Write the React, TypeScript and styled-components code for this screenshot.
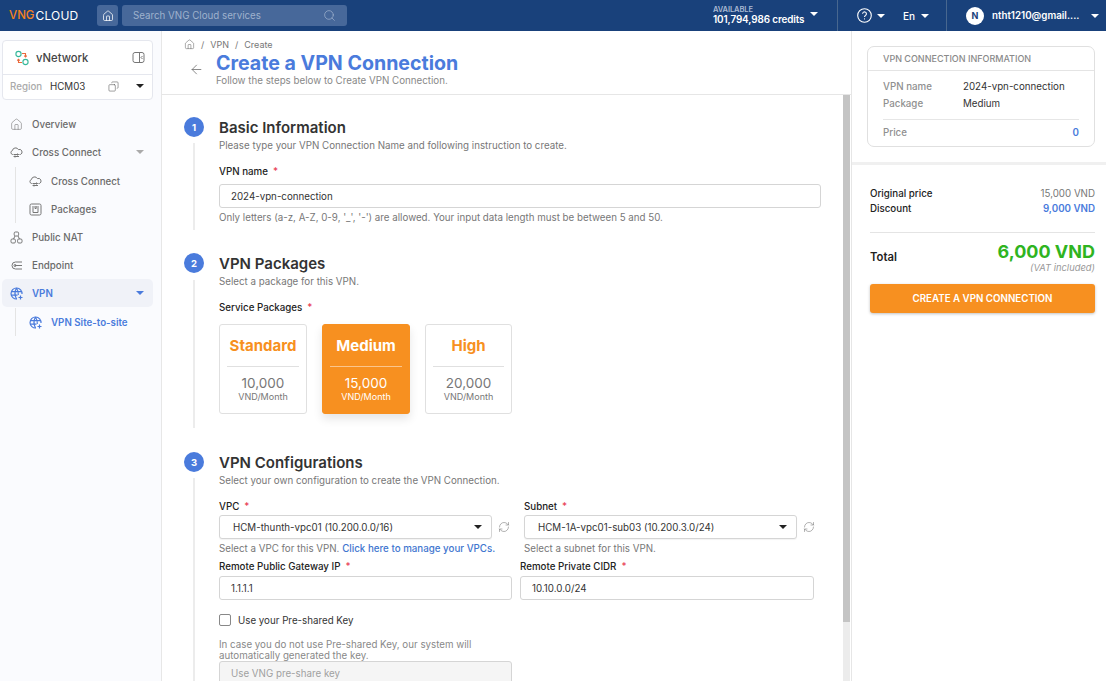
import React from "react";
import styled, { createGlobalStyle } from "styled-components";
import { ArrowLeft, Copy, Home, RefreshCw, Search } from "lucide-react";

const GlobalStyle = createGlobalStyle`
  html, body {
    margin: 0;
    height: 100%;
    overflow: hidden;
    font-family: Inter, "Noto Sans", sans-serif;
    color: #333;
  }
  * { box-sizing: border-box; }
`;

const Page = styled.div`
  width: 1106px;
  height: 681px;
  display: flex;
  flex-direction: column;
  background: #fff;
  overflow: hidden;
`;

const TopBar = styled.header`
  height: 31px;
  flex: none;
  background: #19417b;
  display: flex;
  align-items: center;
  color: #fff;
`;

const Logo = styled.div`
  width: 97px;
  padding-left: 9px;
  font-size: 12px;
  letter-spacing: 0.2px;
  display: flex;
  font-weight: 400;
`;

const LogoMark = styled.span`
  color: #f58220;
  font-size: 11.5px;
  font-weight: 500;
  letter-spacing: 0;
  margin-right: 1px;
`;

const HomeButton = styled.div`
  width: 21px;
  height: 21px;
  border-radius: 3px;
  background: #47689a;
  display: flex;
  align-items: center;
  justify-content: center;
  margin-right: 4px;
`;

const SearchBox = styled.div`
  width: 225px;
  height: 21px;
  border-radius: 3px;
  background: #47689a;
  display: flex;
  align-items: center;
  justify-content: space-between;
  padding: 0 11px;
  font-size: 9.75px;
  color: #9fb2cd;
`;

const Credits = styled.div`
  margin-left: 366px;
  width: 124px;
  display: flex;
  align-items: flex-start;
  gap: 6px;
`;

const CreditText = styled.div`
  display: flex;
  flex-direction: column;
  font-weight: 600;
  font-size: 9.9px;
  line-height: 11px;
  letter-spacing: -0.1px;
`;

const CreditLabel = styled.span`
  font-size: 7.5px;
  line-height: 8px;
  color: #a9bad3;
`;

const Caret = styled.i<{ $color?: string }>`
  display: block;
  flex: none;
  width: 0;
  height: 0;
  border-left: 4px solid transparent;
  border-right: 4px solid transparent;
  border-top: 4px solid ${(p) => p.$color || "#fff"};
`;

const CreditCaret = styled(Caret)`
  margin-top: 6px;
`;

const BarSection = styled.div<{ $width: number }>`
  width: ${(p) => p.$width}px;
  height: 31px;
  border-left: 1px solid #48678f;
  display: flex;
  align-items: center;
  font-size: 10px;
  font-weight: 500;
`;

const HelpGroup = styled.div`
  display: flex;
  align-items: center;
  gap: 5px;
  margin-left: 19px;
  margin-right: 18px;
`;

const LangGroup = styled.div`
  display: flex;
  align-items: center;
  gap: 6px;
`;

const Avatar = styled.div`
  width: 18px;
  height: 18px;
  border-radius: 50%;
  background: #fff;
  color: #19417b;
  font-size: 9px;
  font-weight: 700;
  display: flex;
  align-items: center;
  justify-content: center;
  margin-left: 19px;
  margin-right: 8px;
`;

const Email = styled.span`
  width: 99px;
  font-weight: 600;
  font-size: 9.75px;
`;

const Body = styled.div`
  flex: 1;
  min-height: 0;
  display: flex;
`;

const Sidebar = styled.aside`
  width: 162px;
  flex: none;
  background: #fafbfe;
  border-right: 1px solid #e7e7e7;
  padding: 9px 8px 0 2px;
`;

const ServiceCard = styled.div`
  width: 151px;
  height: 60px;
  background: #fff;
  border: 1px solid #e5e7ee;
  border-radius: 4px;
  margin-bottom: 10px;
`;

const ServiceHead = styled.div`
  height: 34px;
  border-bottom: 1px solid #e5e7ee;
  display: flex;
  align-items: center;
  padding: 0 7px 0 11px;
  font-size: 11.25px;
  font-weight: 500;
  color: #444;
  gap: 6px;
`;

const ServiceName = styled.span`
  flex: 1;
`;

const RegionRow = styled.div`
  height: 22px;
  display: flex;
  align-items: center;
  padding: 0 8px 0 7px;
  font-size: 9.75px;
  color: #333;
`;

const RegionLabel = styled.span`
  color: #aaa;
  font-weight: 500;
  width: 40px;
`;

const RegionValue = styled.span`
  flex: 1;
`;

const RegionCopy = styled(Copy)`
  margin-right: 17px;
  transform: scaleX(-1);
`;

const MenuRow = styled.div<{ $active?: boolean }>`
  height: 28px;
  display: flex;
  align-items: center;
  padding-left: 8px;
  padding-right: 9px;
  border-radius: 5px;
  font-size: 9.75px;
  font-weight: ${(p) => (p.$active ? 600 : 500)};
  color: ${(p) => (p.$active ? "#4a7bdc" : "#6a6a6a")};
  background: ${(p) => (p.$active ? "#f0f2f8" : "transparent")};
  svg { flex: none; }
`;

const MenuLabel = styled.span`
  flex: 1;
  margin-left: 9px;
`;

const SubMenu = styled.div`
  margin-left: 13px;
  margin-top: 1px;
  border-left: 1px solid #e4e4e4;
  > div { padding-left: 13px; }
`;

const SubLink = styled.span`
  color: #4a7bdc;
  font-weight: 600;
`;

const Main = styled.main`
  flex: 1;
  min-width: 0;
  display: flex;
  flex-direction: column;
`;

const PageHead = styled.div`
  height: 64px;
  flex: none;
  border-bottom: 1px solid #e6e6e6;
  padding: 8px 0 0 23px;
`;

const Crumbs = styled.div`
  display: flex;
  align-items: center;
  gap: 6px;
  font-size: 9px;
  line-height: 11px;
  color: #777;
  height: 11px;
`;

const CrumbHome = styled(Home)`
  margin-left: -1px;
`;

const HeadRow = styled.div`
  display: flex;
  align-items: center;
  gap: 12px;
  margin-left: 4px;
`;

const BackArrow = styled(ArrowLeft)`
  margin-top: 3px;
`;

const TitleBlock = styled.div`
  display: flex;
  flex-direction: column;
`;

const PageTitle = styled.h1`
  margin: 2px 0 0;
  font-size: 19.6px;
  line-height: 23px;
  font-weight: 650;
  color: #4a7bdc;
`;

const PageSub = styled.div`
  font-size: 9.75px;
  line-height: 11px;
  color: #888;
`;

const ScrollArea = styled.div`
  flex: 1;
  min-height: 0;
  display: flex;
`;

const Content = styled.div`
  flex: 1;
  min-width: 0;
  overflow: hidden;
  padding: 22px 0 0 22px;
`;

const ScrollTrack = styled.div`
  width: 7px;
  flex: none;
  background: #ececec;
  margin-right: 1px;
`;

const ScrollThumb = styled.div`
  height: 527px;
  background: #c4c4c4;
`;

const Step = styled.section<{ $height: number }>`
  display: flex;
  height: ${(p) => p.$height}px;
`;

const StepRail = styled.div`
  width: 35px;
  flex: none;
  display: flex;
  flex-direction: column;
  align-items: flex-start;
`;

const StepBadge = styled.div`
  width: 20px;
  height: 20px;
  border-radius: 50%;
  background: #4a7bdc;
  color: #fff;
  font-size: 9.5px;
  font-weight: 700;
  display: flex;
  align-items: center;
  justify-content: center;
  flex: none;
`;

const StepLine = styled.div<{ $length: number; $gap: number }>`
  width: 2px;
  height: ${(p) => p.$length}px;
  background: #ececec;
  margin-left: 9px;
  margin-top: ${(p) => p.$gap}px;
`;

const StepBody = styled.div`
  flex: 1;
  min-width: 0;
`;

const StepTitle = styled.h2`
  margin: 1px 0 0;
  font-size: 15px;
  line-height: 20px;
  font-weight: 600;
  color: #333;
`;

const StepDesc = styled.div`
  font-size: 9.75px;
  line-height: 12px;
  color: #777;
  margin-top: 2px;
`;

const FieldLabel = styled.div`
  font-size: 9.75px;
  line-height: 12px;
  font-weight: 500;
  color: #222;
`;

const Required = styled.span`
  color: #e8384f;
  margin-left: 5px;
`;

const TextInput = styled.div<{ $disabled?: boolean; $width: number }>`
  width: ${(p) => p.$width}px;
  height: 24px;
  border: 1px solid #d5d5d5;
  border-radius: 3px;
  padding: 0 11px;
  display: flex;
  align-items: center;
  font-size: 9.75px;
  color: ${(p) => (p.$disabled ? "#a0a0a0" : "#333")};
  background: ${(p) => (p.$disabled ? "#f5f5f5" : "#fff")};
`;

const SelectInput = styled(TextInput)`
  padding: 0 9px 0 13px;
  justify-content: space-between;
  box-shadow: 0 1px 1px rgba(0, 0, 0, 0.05);
`;

const Hint = styled.div`
  font-size: 9.75px;
  line-height: 12px;
  color: #777;
  margin-top: 4px;
`;

const HintLink = styled.span`
  color: #3f76cf;
  font-weight: 500;
`;

const NameField = styled.div`
  margin-top: 14px;
  > div:nth-child(2) { margin-top: 6px; }
`;

const PackageBlock = styled.div`
  margin-top: 14px;
`;

const PackageRow = styled.div`
  display: flex;
  gap: 15px;
  margin-top: 10px;
`;

const PackageCard = styled.div<{ $selected?: boolean }>`
  width: 88px;
  height: 90px;
  border: 1px solid ${(p) => (p.$selected ? "#f79020" : "#e0e0e0")};
  border-radius: 3px;
  background: ${(p) => (p.$selected ? "#f79020" : "#fff")};
  color: ${(p) => (p.$selected ? "#fff" : "#777")};
  box-shadow: ${(p) => (p.$selected ? "0 5px 10px rgba(0,0,0,0.1)" : "none")};
  padding: 0 7px;
  display: flex;
  flex-direction: column;
  align-items: center;
  &:nth-child(3) { width: 87px; }
`;

const PackageName = styled.div<{ $selected?: boolean }>`
  align-self: stretch;
  height: 42px;
  display: flex;
  align-items: center;
  justify-content: center;
  border-bottom: 1px solid ${(p) => (p.$selected ? "#fbc58c" : "#e0e0e0")};
  font-size: 15px;
  font-weight: 650;
  white-space: nowrap;
  color: ${(p) => (p.$selected ? "#fff" : "#f79020")};
`;

const PackagePrice = styled.div`
  font-size: 13.5px;
  line-height: 16px;
  margin-top: 8px;
`;

const PackageUnit = styled.div`
  font-size: 9px;
  line-height: 11px;
`;

const ConfigGrid = styled.div`
  display: grid;
  grid-template-columns: 293px 293px;
  column-gap: 12px;
  margin-top: 14px;
`;

const SelectCell = styled.div`
  > div:nth-child(2) { margin-top: 2px; }
`;

const SelectLine = styled.div`
  display: flex;
  align-items: center;
  gap: 6px;
  color: #808080;
`;

const InputGrid = styled.div`
  display: flex;
  gap: 8px;
  margin-top: 6px;
`;

const InputCell = styled.div`
  > div:nth-child(2) { margin-top: 3px; }
`;

const CheckRow = styled.div`
  display: flex;
  align-items: center;
  gap: 7px;
  margin-top: 14px;
  font-size: 9.75px;
  color: #333;
`;

const CheckBox = styled.div`
  width: 12px;
  height: 12px;
  border: 1px solid #888;
  border-radius: 2px;
  background: #fff;
`;

const KeyNote = styled.div`
  font-size: 9.75px;
  line-height: 11px;
  color: #888;
  width: 280px;
  margin-top: 13px;
`;

const SidePanel = styled.aside`
  width: 255px;
  flex: none;
  border-left: 1px solid #e6e6e6;
`;

const InfoWrap = styled.div`
  height: 134px;
  padding: 15px 11px 0 15px;
  border-bottom: 3px solid #f0f0f0;
`;

const InfoCard = styled.div`
  border: 1px solid #e0e0e0;
  border-radius: 7px;
  height: 101px;
`;

const InfoHead = styled.div`
  height: 24px;
  border-bottom: 1px solid #e4e4e4;
  display: flex;
  align-items: center;
  padding-left: 15px;
  font-size: 9px;
  font-weight: 500;
  color: #8a8a8a;
`;

const InfoBody = styled.div`
  padding: 7px 15px 0;
`;

const InfoRow = styled.div`
  display: flex;
  height: 17px;
  align-items: center;
  font-size: 9.75px;
  color: #333;
`;

const InfoLabel = styled.span`
  width: 80px;
  color: #8f8f8f;
  font-weight: 500;
`;

const PriceRow = styled.div`
  border-top: 1px solid #e6e6e6;
  margin-top: 7px;
  padding-top: 7px;
  display: flex;
  justify-content: space-between;
  font-size: 9.75px;
  font-weight: 500;
  color: #8f8f8f;
`;

const PriceValue = styled.span`
  color: #4a7bdc;
  font-weight: 600;
`;

const Summary = styled.div`
  padding: 21px 11px 0 18px;
`;

const SummaryRow = styled.div`
  display: flex;
  justify-content: space-between;
  align-items: center;
  height: 15px;
  font-size: 9.75px;
  font-weight: 500;
  color: #222;
`;

const SummaryValue = styled.span<{ $accent?: boolean }>`
  color: ${(p) => (p.$accent ? "#4a7bdc" : "#777")};
  font-weight: ${(p) => (p.$accent ? 600 : 400)};
`;

const TotalRow = styled.div`
  border-top: 1px solid #e4e4e4;
  margin-top: 16px;
  padding-top: 8px;
  display: flex;
  justify-content: space-between;
  align-items: center;
`;

const TotalLabel = styled.span`
  font-size: 11.25px;
  font-weight: 600;
  color: #222;
`;

const TotalValue = styled.div`
  text-align: right;
`;

const TotalAmount = styled.div`
  font-size: 18px;
  line-height: 21px;
  font-weight: 700;
  color: #2fb41f;
`;

const VatNote = styled.div`
  font-size: 9.4px;
  line-height: 11px;
  font-style: italic;
  color: #999;
`;

const CreateButton = styled.div`
  margin-top: 11px;
  height: 29px;
  border-radius: 3px;
  background: #f79020;
  color: #fff;
  font-size: 9.75px;
  font-weight: 600;
  display: flex;
  align-items: center;
  justify-content: center;
  box-shadow: 0 1px 3px rgba(0, 0, 0, 0.25);
`;

const NetworkIcon = () => (
  <svg width="16" height="16" viewBox="0 0 16 16" fill="none">
    <circle cx="4.5" cy="4" r="2.6" stroke="#35b89a" strokeWidth="1.1" />
    <circle cx="11.5" cy="12" r="2.6" stroke="#35b89a" strokeWidth="1.1" />
    <path d="M8 3.5h3.5v3M8 12.5H4.5v-3" stroke="#ea6a3c" strokeWidth="1.1" />
    <path d="M10.2 5.6l1.3 1.3 1.3-1.3M3.2 10.6l1.3-1.3 1.3 1.3" stroke="#ea6a3c" strokeWidth="1.1" />
  </svg>
);

const PanelIcon = () => (
  <svg width="13" height="13" viewBox="0 0 13 13" fill="none" stroke="#777" strokeWidth="1">
    <rect x="1" y="1.5" width="11" height="10" rx="2" />
    <path d="M7.5 1.5v10M10.5 5L9 6.5 10.5 8" />
  </svg>
);

const CloudIcon = () => (
  <svg width="13" height="13" viewBox="0 0 13 13" fill="none" stroke="#777" strokeWidth="1">
    <path d="M3 8.5H2.6A2 2 0 0 1 2.4 4.6 3.2 3.2 0 0 1 8.4 3.6 2.5 2.5 0 0 1 10.4 8.5H9.5" />
    <path d="M3.5 8.5h5M7.5 7.5l1 1-1 1M4 10.5h5M5 9.5l-1 1 1 1" />
  </svg>
);

const PackageIcon = () => (
  <svg width="13" height="13" viewBox="0 0 13 13" fill="none" stroke="#777" strokeWidth="1">
    <rect x="1" y="1" width="11" height="11" rx="1.5" />
    <path d="M4 3v6.5h5V3M6 3v2.5h1.2V3" />
  </svg>
);

const NatIcon = () => (
  <svg width="13" height="13" viewBox="0 0 13 13" fill="none" stroke="#777" strokeWidth="1">
    <rect x="4.2" y="1" width="4.4" height="4" rx="1.2" />
    <rect x="1" y="8" width="4.4" height="4" rx="1.2" />
    <rect x="7.6" y="8" width="4.4" height="4" rx="1.2" />
    <path d="M5 5l-1.5 3M8 5l1.5 3" />
  </svg>
);

const EndpointIcon = () => (
  <svg width="13" height="13" viewBox="0 0 13 13" fill="none" stroke="#777" strokeWidth="1">
    <path d="M12 3H5.5a3.5 3.5 0 0 0 0 7H12" />
    <path d="M5 6.5h7" />
    <circle cx="5" cy="6.5" r="1" />
  </svg>
);

const VpnIcon = () => (
  <svg width="13" height="13" viewBox="0 0 13 13" fill="none" stroke="#4a7bdc" strokeWidth="1.2">
    <path d="M7 12a5.5 5.5 0 1 1 5-5" />
    <path d="M1.2 4.6h10.4M1.2 8.2h6.3" />
    <path d="M6.5 1C4.6 4.4 4.6 8.6 6.5 12M6.5 1c1.5 2.4 2 4.6 1.8 7" />
    <path d="M10.5 8.5v4M8.5 10.5h4" />
  </svg>
);

const HelpIcon = () => (
  <svg width="15" height="15" viewBox="0 0 15 15" fill="none" stroke="#fff" strokeWidth="1.1">
    <circle cx="7.5" cy="7.5" r="6.8" />
    <path d="M5.6 5.8a1.9 1.9 0 1 1 2.9 1.6c-.7.4-1 .8-1 1.6" />
    <path d="M7.5 10.4v1" />
  </svg>
);

const App: React.FC = () => {
  return (
    <Page>
      <GlobalStyle />
      <TopBar>
        <Logo>
          <LogoMark>VNG</LogoMark>CLOUD
        </Logo>
        <HomeButton>
          <Home size={12} strokeWidth={1.5} color="#fff" />
        </HomeButton>
        <SearchBox>
          Search VNG Cloud services
          <Search size={13} strokeWidth={1.2} color="#a9bad3" />
        </SearchBox>
        <Credits>
          <CreditText>
            <CreditLabel>AVAILABLE</CreditLabel>
            101,794,986 credits
          </CreditText>
          <CreditCaret />
        </Credits>
        <BarSection $width={109}>
          <HelpGroup>
            <HelpIcon />
            <Caret />
          </HelpGroup>
          <LangGroup>
            En
            <Caret />
          </LangGroup>
        </BarSection>
        <BarSection $width={160}>
          <Avatar>N</Avatar>
          <Email>ntht1210@gmail....</Email>
          <Caret />
        </BarSection>
      </TopBar>
      <Body>
        <Sidebar>
          <ServiceCard>
            <ServiceHead>
              <NetworkIcon />
              <ServiceName>vNetwork</ServiceName>
              <PanelIcon />
            </ServiceHead>
            <RegionRow>
              <RegionLabel>Region</RegionLabel>
              <RegionValue>HCM03</RegionValue>
              <RegionCopy size={11} strokeWidth={1.2} color="#555" />
              <Caret $color="#222" />
            </RegionRow>
          </ServiceCard>
          <MenuRow>
            <Home size={13} strokeWidth={1.1} color="#777" />
            <MenuLabel>Overview</MenuLabel>
          </MenuRow>
          <MenuRow>
            <CloudIcon />
            <MenuLabel>Cross Connect</MenuLabel>
            <Caret $color="#aaa" />
          </MenuRow>
          <SubMenu>
            <MenuRow>
              <CloudIcon />
              <MenuLabel>Cross Connect</MenuLabel>
            </MenuRow>
            <MenuRow>
              <PackageIcon />
              <MenuLabel>Packages</MenuLabel>
            </MenuRow>
          </SubMenu>
          <MenuRow>
            <NatIcon />
            <MenuLabel>Public NAT</MenuLabel>
          </MenuRow>
          <MenuRow>
            <EndpointIcon />
            <MenuLabel>Endpoint</MenuLabel>
          </MenuRow>
          <MenuRow $active>
            <VpnIcon />
            <MenuLabel>VPN</MenuLabel>
            <Caret $color="#4a7bdc" />
          </MenuRow>
          <SubMenu>
            <MenuRow>
              <VpnIcon />
              <MenuLabel>
                <SubLink>VPN Site-to-site</SubLink>
              </MenuLabel>
            </MenuRow>
          </SubMenu>
        </Sidebar>
        <Main>
          <PageHead>
            <Crumbs>
              <CrumbHome size={11} strokeWidth={1.2} color="#666" />
              <span>/</span>
              <span>VPN</span>
              <span>/</span>
              <span>Create</span>
            </Crumbs>
            <HeadRow>
              <BackArrow size={15} strokeWidth={1.2} color="#666" />
              <TitleBlock>
                <PageTitle>Create a VPN Connection</PageTitle>
                <PageSub>Follow the steps below to Create VPN Connection.</PageSub>
              </TitleBlock>
            </HeadRow>
          </PageHead>
          <ScrollArea>
            <Content>
              <Step $height={136}>
                <StepRail>
                  <StepBadge>1</StepBadge>
                  <StepLine $gap={6} $length={87} />
                </StepRail>
                <StepBody>
                  <StepTitle>Basic Information</StepTitle>
                  <StepDesc>Please type your VPN Connection Name and following instruction to create.</StepDesc>
                  <NameField>
                    <FieldLabel>
                      VPN name<Required>*</Required>
                    </FieldLabel>
                    <TextInput $width={602}>2024-vpn-connection</TextInput>
                    <Hint>Only letters (a-z, A-Z, 0-9, '_', '-') are allowed. Your input data length must be between 5 and 50.</Hint>
                  </NameField>
                </StepBody>
              </Step>
              <Step $height={199}>
                <StepRail>
                  <StepBadge>2</StepBadge>
                  <StepLine $gap={7} $length={148} />
                </StepRail>
                <StepBody>
                  <StepTitle>VPN Packages</StepTitle>
                  <StepDesc>Select a package for this VPN.</StepDesc>
                  <PackageBlock>
                    <FieldLabel>
                      Service Packages<Required>*</Required>
                    </FieldLabel>
                    <PackageRow>
                      <PackageCard>
                        <PackageName>Standard</PackageName>
                        <PackagePrice>10,000</PackagePrice>
                        <PackageUnit>VND/Month</PackageUnit>
                      </PackageCard>
                      <PackageCard $selected>
                        <PackageName $selected>Medium</PackageName>
                        <PackagePrice>15,000</PackagePrice>
                        <PackageUnit>VND/Month</PackageUnit>
                      </PackageCard>
                      <PackageCard>
                        <PackageName>High</PackageName>
                        <PackagePrice>20,000</PackagePrice>
                        <PackageUnit>VND/Month</PackageUnit>
                      </PackageCard>
                    </PackageRow>
                  </PackageBlock>
                </StepBody>
              </Step>
              <Step $height={240}>
                <StepRail>
                  <StepBadge>3</StepBadge>
                  <StepLine $gap={6} $length={214} />
                </StepRail>
                <StepBody>
                  <StepTitle>VPN Configurations</StepTitle>
                  <StepDesc>Select your own configuration to create the VPN Connection.</StepDesc>
                  <ConfigGrid>
                    <SelectCell>
                      <FieldLabel>
                        VPC<Required>*</Required>
                      </FieldLabel>
                      <SelectLine>
                        <SelectInput $width={273}>
                          HCM-thunth-vpc01 (10.200.0.0/16)
                          <Caret $color="#222" />
                        </SelectInput>
                        <RefreshCw size={12} strokeWidth={1.2} />
                      </SelectLine>
                      <Hint>
                        Select a VPC for this VPN. <HintLink>Click here to manage your VPCs.</HintLink>
                      </Hint>
                    </SelectCell>
                    <SelectCell>
                      <FieldLabel>
                        Subnet<Required>*</Required>
                      </FieldLabel>
                      <SelectLine>
                        <SelectInput $width={273}>
                          HCM-1A-vpc01-sub03 (10.200.3.0/24)
                          <Caret $color="#222" />
                        </SelectInput>
                        <RefreshCw size={12} strokeWidth={1.2} />
                      </SelectLine>
                      <Hint>Select a subnet for this VPN.</Hint>
                    </SelectCell>
                  </ConfigGrid>
                  <InputGrid>
                    <InputCell>
                      <FieldLabel>
                        Remote Public Gateway IP<Required>*</Required>
                      </FieldLabel>
                      <TextInput $width={293}>1.1.1.1</TextInput>
                    </InputCell>
                    <InputCell>
                      <FieldLabel>
                        Remote Private CIDR<Required>*</Required>
                      </FieldLabel>
                      <TextInput $width={294}>10.10.0.0/24</TextInput>
                    </InputCell>
                  </InputGrid>
                  <CheckRow>
                    <CheckBox />
                    Use your Pre-shared Key
                  </CheckRow>
                  <KeyNote>In case you do not use Pre-shared Key, our system will automatically generated the key.</KeyNote>
                  <TextInput $disabled $width={293}>Use VNG pre-share key</TextInput>
                </StepBody>
              </Step>
            </Content>
            <ScrollTrack>
              <ScrollThumb />
            </ScrollTrack>
          </ScrollArea>
        </Main>
        <SidePanel>
          <InfoWrap>
            <InfoCard>
              <InfoHead>VPN CONNECTION INFORMATION</InfoHead>
              <InfoBody>
                <InfoRow>
                  <InfoLabel>VPN name</InfoLabel>2024-vpn-connection
                </InfoRow>
                <InfoRow>
                  <InfoLabel>Package</InfoLabel>Medium
                </InfoRow>
                <PriceRow>
                  Price<PriceValue>0</PriceValue>
                </PriceRow>
              </InfoBody>
            </InfoCard>
          </InfoWrap>
          <Summary>
            <SummaryRow>
              Original price<SummaryValue>15,000 VND</SummaryValue>
            </SummaryRow>
            <SummaryRow>
              Discount<SummaryValue $accent>9,000 VND</SummaryValue>
            </SummaryRow>
            <TotalRow>
              <TotalLabel>Total</TotalLabel>
              <TotalValue>
                <TotalAmount>6,000 VND</TotalAmount>
                <VatNote>(VAT included)</VatNote>
              </TotalValue>
            </TotalRow>
            <CreateButton>CREATE A VPN CONNECTION</CreateButton>
          </Summary>
        </SidePanel>
      </Body>
    </Page>
  );
};

export default App;
